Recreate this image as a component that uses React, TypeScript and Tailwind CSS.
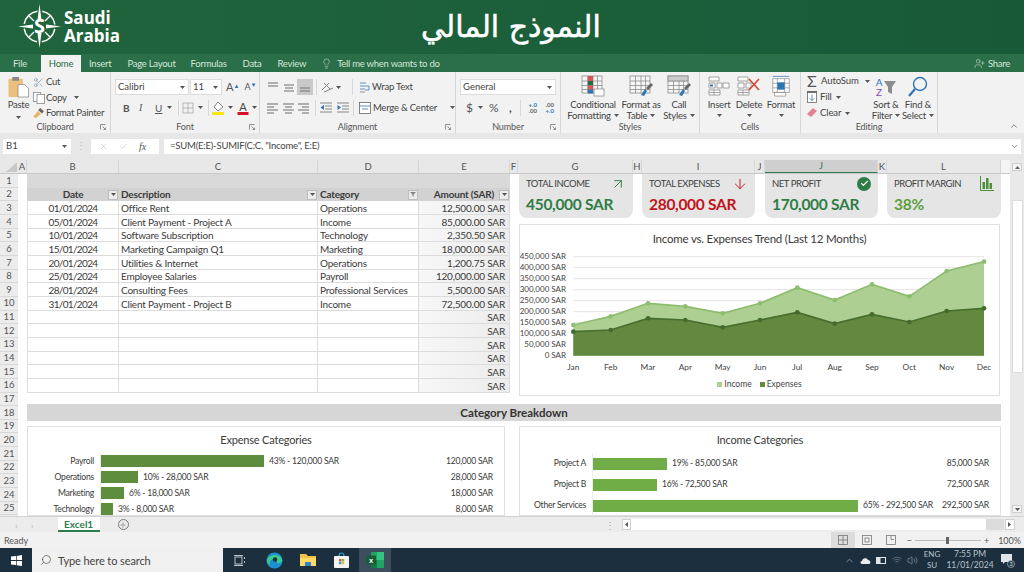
import React from "react";
import { Lightbulb, UserPlus, Scissors, ArrowUpRight, ArrowDown, Check, Search, Plus, X, ChevronUp, ChevronDown, Wifi, Volume2 } from "lucide-react";

const Caret = ({ className = "" }: { className?: string }) => (
  <svg width="5" height="3" viewBox="0 0 5 3" className={`shrink-0 ${className}`}><polygon points="0,0 5,0 2.5,3" fill="#555" /></svg>
);

const Launcher = () => (
  <svg width="6" height="6" viewBox="0 0 6 6" className="absolute right-[4px] bottom-[3px]" fill="none" stroke="#777" strokeWidth="0.8"><path d="M0.5 5.5V0.5H5.5M2.5 2.5L5.5 5.5M5.5 3.5V5.5H3.5" /></svg>
);

const Lines = ({ ys, xs }: { ys: number[]; xs: [number, number][] }) => (
  <svg width="12" height="12" viewBox="0 0 12 12" stroke="#7a7a7a" strokeWidth="1.1">
    {ys.map((y, i) => <line key={i} x1={xs[i][0]} x2={xs[i][1]} y1={y} y2={y} />)}
  </svg>
);

const Group = ({ w, label, launcher, children }: { w: string; label: string; launcher?: boolean; children: React.ReactNode }) => (
  <div className={`${w} relative flex h-full shrink-0 flex-col border-r border-[#d6d6d6]`}>
    <div className="min-h-0 flex-1">{children}</div>
    <div className="flex h-[13px] items-center justify-center text-[9px] leading-none tracking-[-0.1px] text-[#555]">{label}</div>
    {launcher && <Launcher />}
  </div>
);

const Big = ({ w, icon, l1, l2, caret }: { w: string; icon: React.ReactNode; l1: string; l2?: string; caret?: boolean }) => (
  <div className={`${w} flex shrink-0 flex-col items-center text-[9.5px] leading-[11px] tracking-[-0.2px] text-[#444]`}>
    <div className="flex h-[22px] items-center justify-center">{icon}</div>
    <div className="mt-[2px] whitespace-nowrap">{l1}</div>
    <div className="flex h-[11px] items-center gap-[3px] whitespace-nowrap">{l2}{caret && <Caret />}</div>
  </div>
);

const Sep = ({ className = "" }: { className?: string }) => <div className={`h-[16px] w-px shrink-0 bg-[#d8d8d8] ${className}`} />;

const Logo = () => (
  <svg width="44" height="46" viewBox="0 0 44 46" className="shrink-0">
    <circle cx="21.5" cy="22.5" r="15.5" fill="none" stroke="#fff" strokeWidth="1.5" strokeDasharray="19.3 5" strokeDashoffset="-2.5" />
    <polygon points="21.5,0 23.5,16 19.5,16" fill="#fff" />
    <polygon points="21.5,44 23.5,29 19.5,29" fill="#fff" />
    <polygon points="0,22.5 15,20.5 15,24.5" fill="#fff" />
    <polygon points="43,22.5 28,20.5 28,24.5" fill="#fff" />
    <g stroke="#fff" strokeWidth="1.2">
      <line x1="11" y1="12" x2="16" y2="17" /><line x1="32" y1="12" x2="27" y2="17" />
      <line x1="11" y1="33" x2="16" y2="28" /><line x1="32" y1="33" x2="27" y2="28" />
    </g>
    <text x="21.5" y="29" textAnchor="middle" fontSize="20" fontWeight="700" fill="#fff" fontFamily="Open Sans, sans-serif">S</text>
  </svg>
);

const TitleBar = () => (
  <div className="flex h-[54px] items-center bg-gradient-to-r from-[#20643d] to-[#185a38]">
    <div className="flex w-[421px] shrink-0 items-center pl-[18px]">
      <Logo />
      <div className="ml-[2px] text-[17px] font-bold leading-[18.5px] text-white [font-family:'Open_Sans',sans-serif]">Saudi<br />Arabia</div>
    </div>
    <div dir="rtl" className="text-[30px] leading-none text-white [-webkit-text-stroke:0.5px_white] [font-family:'DejaVu_Sans',sans-serif]">النموذج المالي</div>
  </div>
);

const tabs: [string, string][] = [["Insert", "ml-[8px]"], ["Page Layout", "ml-[16px]"], ["Formulas", "ml-[15px]"], ["Data", "ml-[16px]"], ["Review", "ml-[16px]"]];

const TabBar = () => (
  <div className="flex h-[18px] items-end bg-[#2b6f48] text-[9.5px] leading-none tracking-[-0.25px] text-[#d5e6da]">
    <div className="flex h-[17px] w-[41px] items-center pl-[13px]">File</div>
    <div className="flex h-[17px] w-[40px] items-center justify-center bg-[#f2f2f2] text-[#2b6f48]">Home</div>
    {tabs.map(([t, c]) => <div key={t} className={`flex h-[17px] items-center whitespace-nowrap ${c}`}>{t}</div>)}
    <div className="ml-[15px] flex h-[17px] items-center gap-[5px] whitespace-nowrap">
      <Lightbulb size={11} strokeWidth={1.2} />Tell me when wamts to do
    </div>
    <div className="ml-auto flex h-[17px] items-center gap-[3px] pr-[14px]"><UserPlus size={11} strokeWidth={1.2} />Share</div>
  </div>
);

const PasteIcon = () => (
  <svg width="23" height="22" viewBox="0 0 23 23">
    <rect x="1" y="3" width="15" height="19" rx="1" fill="#ecc07c" />
    <rect x="5" y="1" width="7" height="4" fill="#8a8a8a" />
    <path d="M11 9h7l4 4v9H11z" fill="#fff" stroke="#888" strokeWidth="0.8" />
  </svg>
);
const CopyIcon = () => (
  <svg width="12" height="12" viewBox="0 0 12 12" fill="#fff" stroke="#888" strokeWidth="0.8"><rect x="0.5" y="0.5" width="7" height="9" /><rect x="4" y="2.5" width="7.5" height="9" /></svg>
);
const PainterIcon = () => (
  <svg width="12" height="10" viewBox="0 0 12 10"><path d="M0 9L5 3L8 6L3 10z" fill="#e8b567" /><rect x="6" y="1" width="5" height="3" transform="rotate(40 8 2)" fill="#666" /></svg>
);

const Clipboard = () => (
  <Group w="w-[111px]" label="Clipboard" launcher>
    <div className="flex pt-[4px] text-[9.5px] leading-none tracking-[-0.25px] text-[#444]">
      <div className="ml-[6px] flex w-[25px] flex-col items-center">
        <PasteIcon />
        <div className="mt-[2px]">Paste</div>
        <Caret className="mt-[6px]" />
      </div>
      <div className="ml-[2px] flex flex-col gap-[3.5px] whitespace-nowrap">
        <div className="flex h-[12px] items-center gap-[2px]"><Scissors size={11} strokeWidth={1.1} color="#5a7fa5" />Cut</div>
        <div className="flex h-[12px] items-center gap-[1px]"><CopyIcon />Copy<Caret className="ml-[6px]" /></div>
        <div className="flex h-[12px] items-center gap-[1px]"><PainterIcon />Format Painter</div>
      </div>
    </div>
  </Group>
);

const Box = ({ w, text, className = "" }: { w: string; text: string; className?: string }) => (
  <div className={`${w} flex h-[16px] shrink-0 items-center justify-between border border-[#dcdcdc] bg-white pl-[2px] pr-[3px] text-[9.5px] text-[#444] ${className}`}>{text}<Caret /></div>
);

const Font = () => (
  <Group w="w-[149px]" label="Font" launcher>
    <div className="flex h-[23px] items-end pl-[4px]">
      <Box w="w-[74px]" text="Calibri" />
      <Box w="w-[32px]" text="11" className="ml-px" />
      <span className="ml-[4px] text-[11px] leading-[16px] text-[#555]">A<sup className="text-[6px] text-[#2e75b6]">▲</sup></span>
      <span className="ml-[5px] text-[9px] leading-[16px] text-[#555]">A<sup className="text-[6px] text-[#2e75b6]">▼</sup></span>
    </div>
    <div className="mt-[5px] flex h-[15px] items-center pl-[12px] text-[10px] leading-none text-[#555]">
      <span className="w-[16px] font-bold">B</span>
      <span className="w-[16px] italic [font-family:'Liberation_Serif',serif]">I</span>
      <span className="w-[12px] underline">U</span>
      <Caret />
      <Sep className="ml-[6px]" />
      <svg width="12" height="12" viewBox="0 0 12 12" fill="none" stroke="#aaa" strokeWidth="0.8" className="ml-[3px]"><rect x="1" y="1" width="10" height="10" /><path d="M6 1v10M1 6h10" /></svg>
      <Caret className="ml-[4px]" />
      <Sep className="ml-[5px]" />
      <svg width="13" height="14" viewBox="0 0 13 14" className="ml-[3px]"><path d="M6 1L11 6L6 10L2 6z" fill="#fff" stroke="#666" strokeWidth="0.8" /><rect x="0" y="11" width="12" height="3" fill="#f5e614" /></svg>
      <Caret className="ml-[3px]" />
      <svg width="12" height="14" viewBox="0 0 12 14" className="ml-[4px]"><text x="6" y="9.5" textAnchor="middle" fontSize="11" fill="#444" fontFamily="Lato, sans-serif">A</text><rect x="0.5" y="11" width="11" height="3" fill="#d8112a" /></svg>
      <Caret className="ml-[3px]" />
    </div>
  </Group>
);

const IndentIcon = ({ flip }: { flip?: boolean }) => (
  <svg width="12" height="11" viewBox="0 0 12 11" stroke="#7a7a7a" strokeWidth="0.9">
    <path d="M0 1h12M5 4h7M5 7h7M0 10h12" />
    <polygon points={flip ? "4,5.5 0.5,3 0.5,8" : "0.5,5.5 4,3 4,8"} fill="#2e75b6" stroke="none" />
  </svg>
);

const Alignment = () => (
  <Group w="w-[196px]" label="Alignment" launcher>
    <div className="flex h-[23px] items-end pl-[7px]">
      <div className="flex h-[16px] w-[16px] items-center"><Lines ys={[2, 5]} xs={[[1, 11], [1, 11]]} /></div>
      <div className="flex h-[16px] w-[14px] items-center"><Lines ys={[4, 7, 10]} xs={[[1, 11], [2, 10], [1, 11]]} /></div>
      <div className="flex h-[16px] w-[16px] items-center justify-center bg-[#c9c9c9]"><Lines ys={[7, 10]} xs={[[1, 11], [1, 11]]} /></div>
      <Sep className="ml-[3px]" />
      <svg width="13" height="12" viewBox="0 0 13 12" className="ml-[4px] mb-[2px]" fill="none" stroke="#777" strokeWidth="0.9"><path d="M1 9L8 2M3 2L9 8M3 11L12 7" /></svg>
      <Caret className="mb-[6px] ml-[2px]" />
      <Sep className="ml-[11px]" />
      <div className="ml-[6px] flex h-[16px] items-center gap-[2px] whitespace-nowrap text-[9.5px] leading-none tracking-[-0.2px] text-[#444]">
        <svg width="11" height="12" viewBox="0 0 11 12" fill="none" stroke="#888" strokeWidth="0.9"><path d="M1 2h6M1 5h9M1 8h5M10 5v4H6" stroke="#4a86c0" /><path d="M1 11h5" /></svg>
        Wrap Text
      </div>
    </div>
    <div className="mt-[5px] flex h-[15px] items-center pl-[7px]">
      <div className="w-[16px]"><Lines ys={[2, 5, 8, 11]} xs={[[0, 11], [0, 7], [0, 11], [0, 7]]} /></div>
      <div className="w-[16px]"><Lines ys={[2, 5, 8, 11]} xs={[[0, 11], [2, 9], [0, 11], [2, 9]]} /></div>
      <div className="w-[14px]"><Lines ys={[2, 5, 8, 11]} xs={[[0, 11], [4, 11], [0, 11], [4, 11]]} /></div>
      <Sep className="ml-[3px]" />
      <div className="ml-[4px]"><IndentIcon /></div>
      <div className="ml-[5px]"><IndentIcon flip /></div>
      <Sep className="ml-[4px]" />
      <div className="ml-[5px] flex h-[16px] items-center gap-[2px] whitespace-nowrap text-[9.5px] leading-none tracking-[-0.2px] text-[#444]">
        <svg width="12" height="12" viewBox="0 0 12 12" fill="#fff" stroke="#666" strokeWidth="0.8"><rect x="0.5" y="0.5" width="11" height="11" /><path d="M0.5 4h11M3 7h6" stroke="#2e75b6" /></svg>
        Merge &amp; Center
        <Caret className="ml-[11px]" />
      </div>
    </div>
  </Group>
);

const NumIcon = ({ a, b, up }: { a: string; b: string; up: boolean }) => (
  <div className="relative flex h-[12px] w-[11px] flex-col items-end text-[6px] font-bold leading-[6px] text-[#666]">
    <span className={up ? "text-[#2e75b6]" : ""}>{a}</span><span className={up ? "" : "text-[#2e75b6]"}>{b}</span>
  </div>
);

const NumberGroup = () => (
  <Group w="w-[105px]" label="Number" launcher>
    <div className="flex h-[23px] items-end pl-[4px]"><Box w="w-[96px]" text="General" /></div>
    <div className="mt-[5px] flex h-[15px] items-center pl-[10px] text-[12px] leading-none text-[#555]">
      <span className="w-[9px]">$</span>
      <Caret className="ml-[3px]" />
      <span className="ml-[6px] w-[17px]">%</span>
      <span className="ml-[3px] w-[9px] font-bold">,</span>
      <Sep className="ml-[2px]" />
      <div className="ml-[5px]"><NumIcon a="+.0" b=".00" up /></div>
      <div className="ml-[6px]"><NumIcon a=".00" b="+.0" up={false} /></div>
    </div>
  </Group>
);

const TableGrid = ({ children }: { children?: React.ReactNode }) => (
  <svg width="24" height="22" viewBox="0 0 24 22" fill="#f6f6f6" stroke="#8d8d8d" strokeWidth="0.8">
    <rect x="1" y="1" width="20" height="17" />
    <path d="M1 6h20M1 10.5h20M1 14.5h20M6.5 1v17M12 1v17M16.5 1v17" fill="none" />
    {children}
  </svg>
);
const Brush = () => <g stroke="none"><path d="M12 20L16 14L18 16L15 21z" fill="#2e75b6" /><path d="M17 13L22 8L24 10L19 15z" fill="#666" /></g>;

const Styles = () => (
  <Group w="w-[139px]" label="Styles" launcher={false}>
    <div className="flex pt-[3px]">
      <Big w="w-[54px] ml-[5px]" l1="Conditional" l2="Formatting" caret icon={
        <TableGrid>
          <rect x="7" y="1" width="5" height="5" fill="#d9534f" stroke="none" />
          <rect x="7" y="6" width="5" height="4.5" fill="#1d6f42" stroke="none" />
          <rect x="7" y="10.5" width="5" height="4" fill="#d9534f" stroke="none" />
          <rect x="7" y="14.5" width="5" height="4" fill="#2e75b6" stroke="none" />
          <rect x="13" y="14" width="10" height="7" fill="#fff" />
        </TableGrid>} />
      <Big w="w-[42px]" l1="Format as" l2="Table" caret icon={<TableGrid><Brush /></TableGrid>} />
      <Big w="w-[34px]" l1="Call" l2="Styles" caret icon={<TableGrid><rect x="1" y="1" width="20" height="5" fill="#ccc" /><Brush /></TableGrid>} />
    </div>
  </Group>
);

const Cells = () => (
  <Group w="w-[101px]" label="Cells">
    <div className="flex pt-[3px] pl-[4px]">
      <Big w="w-[30px]" l1="Insert" caret icon={
        <svg width="22" height="20" viewBox="0 0 22 20" fill="#fff" stroke="#8d8d8d" strokeWidth="0.8"><path d="M1 1h10v4H1zM1 7h6v5H1zM9 7h5v5H9zM15 7h6v5h-6zM1 14h11v5H1zM6 14v5M1 16.5h11" /><rect x="2" y="8.5" width="3" height="2" fill="#2e75b6" stroke="none" /></svg>} />
      <Big w="w-[30px]" l1="Delete" caret icon={
        <svg width="24" height="20" viewBox="0 0 24 20" fill="#fff" stroke="#8d8d8d" strokeWidth="0.8"><path d="M1 1h10v4H1zM1 7h6v5H1zM9 7h5v5H9zM1 14h11v5H1zM6 14v5M1 16.5h11" /><path d="M12 3L22 14M22 3L12 14" stroke="#d9442f" strokeWidth="1.6" fill="none" /></svg>} />
      <Big w="w-[34px]" l1="Format" caret icon={
        <svg width="20" height="22" viewBox="0 0 20 24" fill="#fff" stroke="#8d8d8d" strokeWidth="0.8"><path d="M1 4h18v15H1zM1 9h18M1 14h18M6 4v15M14 4v15M3 23h12v-4H3z" /><rect x="6" y="8" width="8" height="8" fill="#2e75b6" stroke="none" /><path d="M1 1.5h18" stroke="#2e75b6" /></svg>} />
    </div>
  </Group>
);

const Editing = () => (
  <Group w="w-[137px]" label="Editing">
    <div className="flex pt-[3px] pl-[6px]">
      <div className="flex w-[66px] shrink-0 flex-col gap-[4px] whitespace-nowrap text-[9.5px] leading-none tracking-[-0.1px] text-[#444]">
        <div className="flex h-[12px] items-center gap-[3px]"><span className="w-[11px] text-[16px] text-[#555]">Σ</span>AutoSum<Caret className="ml-[3px]" /></div>
        <div className="flex h-[12px] items-center gap-[3px]">
          <svg width="10" height="12" viewBox="0 0 10 12" fill="#fff" stroke="#666" strokeWidth="0.8"><rect x="0.5" y="1" width="9" height="10.5" /><path d="M0 1h10" strokeWidth="1.8" /><path d="M5 3.5v6M3 7.5l2 2 2-2" stroke="#2e75b6" fill="none" /></svg>
          Fill<Caret className="ml-[1px]" />
        </div>
        <div className="flex h-[12px] items-center gap-[3px]">
          <svg width="10" height="10" viewBox="0 0 10 10"><path d="M0 6L6 0L10 3L4 9z" fill="#e87d96" /></svg>
          Clear<Caret className="ml-[1px]" />
        </div>
      </div>
      <Big w="w-[26px]" l1="Sort &" l2="Filter" caret icon={
        <svg width="22" height="21" viewBox="0 0 22 21"><text x="4" y="9.5" textAnchor="middle" fontSize="10" fill="#2e75b6" fontFamily="Lato, sans-serif">A</text><text x="4" y="20" textAnchor="middle" fontSize="10" fill="#8c4ca5" fontFamily="Lato, sans-serif">Z</text><path d="M9 5h12l-4 6v7l-4-2v-5z" fill="#8d8d8d" /></svg>} />
      <Big w="w-[38px]" l1="Find &" l2="Select" caret icon={
        <svg width="20" height="21" viewBox="0 0 20 21" fill="none" stroke="#2e75b6" strokeWidth="1.4"><circle cx="12" cy="8" r="6.5" /><path d="M7 13L1 20" strokeWidth="2.2" /></svg>} />
    </div>
  </Group>
);

const Ribbon = () => (
  <div className="relative flex h-[61px] bg-[#f2f2f2]">
    <Clipboard /><Font /><Alignment /><NumberGroup /><Styles /><Cells /><Editing />
    <ChevronUp size={10} color="#666" className="absolute bottom-[2px] right-[5px]" />
  </div>
);

const FormulaBar = () => (
  <div className="flex h-[27px] items-start bg-[#e7e7e7] pl-[3px] pr-[3px] pt-[6px] text-[9.5px] text-[#444]">
    <div className="flex h-[15px] w-[68px] items-center justify-between bg-white pl-[3px] pr-[4px]">B1<Caret /></div>
    <div className="flex h-[15px] w-[20px] items-center justify-center text-[#bbb]">⋮</div>
    <div className="flex h-[15px] w-[68px] items-center gap-[11px] bg-white pl-[8px] text-[#aaa]">
      <X size={9} strokeWidth={1.2} /><Check size={9} strokeWidth={1.2} />
      <span className="text-[10px] italic text-[#555] [font-family:'Liberation_Serif',serif]">fx</span>
    </div>
    <div className="ml-[5px] flex h-[15px] flex-1 items-center justify-between bg-white pl-[6px] pr-[2px] text-[9.5px] tracking-[-0.2px]">
      =SUM(E:E)-SUMIF(C:C, "Income", E:E)
      <ChevronDown size={9} color="#777" />
    </div>
  </div>
);

const cols: [string, string, boolean?][] = [
  ["A", "w-[9px]"], ["B", "w-[92px]"], ["C", "w-[199px]"], ["D", "w-[101px]"], ["E", "w-[91px]"], ["F", "w-[8px]"],
  ["G", "w-[115px]"], ["H", "w-[9px]"], ["I", "w-[113px]"], ["J", "w-[10px]"], ["J", "w-[113px]", true], ["K", "w-[9px]"], ["L", "w-[114px]"],
];

const ColHeaders = () => (
  <div className="flex h-[14px] shrink-0 border-b border-[#c8c8c8] bg-[#f4f4f4] text-[9.5px] leading-none text-[#555]">
    <div className="flex h-full w-[18px] items-end justify-end bg-[#e8e8e8] pb-[1px] pr-px">
      <svg width="11" height="10" viewBox="0 0 11 10"><polygon points="11,0 11,10 0,10" fill="#c8c8c8" /></svg>
    </div>
    {cols.map(([c, w, active], i) => (
      <div key={i} className={`${w} flex h-full items-center justify-center border-r border-[#d6d6d6] ${active ? "border-b border-b-[#2f7d4f] bg-[#cfcfcf] text-[#2f7d4f]" : "bg-[#e8e8e8]"}`}>{c}</div>
    ))}
  </div>
);

const RowHeaders = () => (
  <div className="flex w-[18px] shrink-0 flex-col bg-[#ececec] text-[9.5px] leading-none text-[#555]">
    {Array.from({ length: 25 }, (_, i) => (
      <div key={i} className="flex h-[13.67px] shrink-0 items-center justify-center border-b border-[#d8d8d8]">{i + 1}</div>
    ))}
  </div>
);

const data = [
  ["01/01/2024", "Office Rent", "Operations", "12,500.00 SAR"],
  ["05/01/2024", "Client Payment - Project A", "Income", "85,000.00 SAR"],
  ["10/01/2024", "Software Subscription", "Technology", "2,350.50 SAR"],
  ["15/01/2024", "Marketing Campaign Q1", "Marketing", "18,000.00 SAR"],
  ["20/01/2024", "Utilities & Internet", "Operations", "1,200.75 SAR"],
  ["25/01/2024", "Employee Salaries", "Payroll", "120,000.00 SAR"],
  ["28/01/2024", "Consulting Fees", "Professional Services", "5,500.00 SAR"],
  ["31/01/2024", "Client Payment - Project B", "Income", "72,500.00 SAR"],
  ["", "", "", "SAR"], ["", "", "", "SAR"], ["", "", "", "SAR"], ["", "", "", "SAR"], ["", "", "", "SAR"], ["", "", "", "SAR"],
];

const FilterBtn = ({ funnel }: { funnel?: boolean }) => (
  <span className="absolute right-[1px] top-[2px] flex h-[10px] w-[10px] items-center justify-center border border-[#bdbdbd] bg-[#ececec]">
    {funnel ? <svg width="6" height="5" viewBox="0 0 6 5"><path d="M0 0h6L3.6 2.5V5L2.4 4V2.5z" fill="#888" /></svg> : <Caret />}
  </span>
);

const Table = () => (
  <div className="w-[483px] shrink-0 text-[10px] leading-none tracking-[-0.2px] text-[#3a3a3a]">
    <div className="h-[13.67px] bg-[#d9d9d9]" />
    <div className="grid h-[13.67px] grid-cols-[92px_199px_101px_91px] bg-[#d2d2d2] font-bold">
      <div className="relative flex items-center justify-center">Date<FilterBtn /></div>
      <div className="relative flex items-center pl-[2px]">Description<FilterBtn /></div>
      <div className="relative flex items-center pl-[2px]">Category<FilterBtn funnel /></div>
      <div className="relative flex items-center justify-end pr-[16px]">Amount (SAR)<FilterBtn /></div>
    </div>
    {data.map((r, i) => (
      <div key={i} className="grid h-[13.67px] grid-cols-[92px_199px_101px_91px] border-b border-[#dcdcdc]">
        <div className="flex items-center justify-center border-l border-r border-[#dcdcdc] pt-px tracking-[-0.65px]">{r[0]}</div>
        <div className="flex items-center border-r border-[#dcdcdc] pl-[2px] pt-px">{r[1]}</div>
        <div className="flex items-center whitespace-nowrap border-r border-[#dcdcdc] pl-[2px] pt-px">{r[2]}</div>
        <div className="flex items-center justify-end border-r border-[#dcdcdc] bg-gradient-to-r from-[#f7f7f7] to-[#ececec] pr-[4px] pt-px">{r[3]}</div>
      </div>
    ))}
  </div>
);

const Kpi = ({ w, label, value, color, icon }: { w: string; label: string; value: string; color: string; icon: React.ReactNode }) => (
  <div className={`${w} h-[44px] shrink-0 rounded-b-[8px] bg-[#e5e5e5] pl-[7px] pr-[7px]`}>
    <div className="flex h-[19px] items-center justify-between whitespace-nowrap text-[9.5px] leading-none tracking-[-0.45px] text-[#3f3f3f]">{label}{icon}</div>
    <div className={`whitespace-nowrap text-[15.5px] font-bold leading-[22px] tracking-[-0.3px] ${color}`}>{value}</div>
  </div>
);

const income = [[190, 510], [302, 484], [414, 445], [526, 454], [638, 475], [750, 445], [862, 398], [974, 435], [1086, 388], [1198, 424], [1310, 348], [1422, 320]];
const expense = [[190, 530], [302, 525], [414, 490], [526, 495], [638, 517], [750, 495], [862, 472], [974, 506], [1086, 478], [1198, 501], [1310, 468], [1422, 460]];
const months = ["Jan", "Feb", "Mar", "Apr", "May", "Jun", "Jul", "Aug", "Sep", "Oct", "Nov", "Dec"];
const yLabels = ["450,000", "400,000", "350,000", "300,000", "250,000", "200,000", "150,000", "100,000", "50,000", "0"];
const pts = (a: number[][]) => a.map((p) => p.join(",")).join(" ");

const TrendChart = () => (
  <div className="mt-[6px] flex h-[172px] w-[481px] flex-col border border-[#e0e0e0] bg-white">
    <div className="flex h-[25px] shrink-0 items-center justify-center pt-[2px] text-[11.5px] leading-none tracking-[-0.2px] text-[#3a3a3a]">Income vs. Expenses Trend (Last 12 Months)</div>
    <svg viewBox="30 285 1437 384" className="h-[128px] w-full shrink-0">
      {yLabels.map((l, i) => {
        const y = 305 + i * 33;
        return (
          <g key={i}>
            {i < 9 && <line x1="190" x2="1422" y1={y} y2={y} stroke="#e6e2e8" strokeWidth="3" />}
            <text x="168" y={y + 8} textAnchor="end" fontSize="24" fill="#444" fontFamily="Lato, sans-serif">{l} SAR</text>
          </g>
        );
      })}
      <polygon points={`190,602 ${pts(income)} 1422,602`} fill="#aecf92" />
      <polyline points={pts(income)} fill="none" stroke="#8dbd6f" strokeWidth="5" />
      {income.map(([x, y], i) => <circle key={i} cx={x} cy={y} r="7" fill="#8dbd6f" />)}
      <polygon points={`190,602 ${pts(expense)} 1422,602`} fill="#62893f" />
      <polyline points={pts(expense)} fill="none" stroke="#466f2e" strokeWidth="5" />
      {expense.map(([x, y], i) => <circle key={i} cx={x} cy={y} r="7" fill="#426b2c" />)}
      {months.map((m, i) => <text key={m} x={190 + i * 112} y="644" textAnchor="middle" fontSize="25" fill="#444" fontFamily="Lato, sans-serif">{m}</text>)}
    </svg>
    <div className="flex h-[12px] items-center justify-center gap-[8px] text-[8.5px] leading-none text-[#444]">
      <span className="flex items-center gap-[2px]"><span className="h-[5px] w-[5px] bg-[#aecf92]" />Income</span>
      <span className="flex items-center gap-[2px]"><span className="h-[5px] w-[5px] bg-[#62893f]" />Expenses</span>
    </div>
  </div>
);

const Dashboard = () => (
  <div className="w-[482px] shrink-0">
    <div className="flex">
      <Kpi w="w-[114px]" label="TOTAL INCOME" value="450,000 SAR" color="text-[#2f7d46]" icon={<ArrowUpRight size={16} strokeWidth={1.4} color="#2f7d46" />} />
      <Kpi w="w-[113px] ml-[9px]" label="TOTAL EXPENSES" value="280,000 SAR" color="text-[#c0141c]" icon={<ArrowDown size={16} strokeWidth={1.4} color="#c0141c" />} />
      <Kpi w="w-[113px] ml-[10px]" label="NET PROFIT" value="170,000 SAR" color="text-[#2f7d46]" icon={
        <span className="flex h-[14px] w-[14px] items-center justify-center rounded-full bg-[#2f7d46]"><Check size={9} strokeWidth={3} color="#fff" /></span>} />
      <Kpi w="w-[114px] ml-[9px]" label="PROFIT MARGIN" value="38%" color="text-[#5e9e3e]" icon={
        <svg width="14" height="15" viewBox="0 0 14 15" fill="#4f8f3a"><path d="M0.5 0v14.5H14" fill="none" stroke="#4f8f3a" /><rect x="2.5" y="6" width="2.5" height="7" /><rect x="6" y="2" width="2.5" height="11" /><rect x="9.5" y="7" width="2.5" height="6" /></svg>} />
    </div>
    <TrendChart />
  </div>
);

const HBarRow = ({ label, bar, text, value, color, h }: { label: string; bar: string; text: string; value: string; color: string; h: string }) => (
  <div className={`flex ${h} items-center whitespace-nowrap text-[8.6px] leading-none tracking-[-0.25px] text-[#3a3a3a]`}>
    <div className="w-[66px] shrink-0 text-right">{label}</div>
    <div className="ml-[6px] flex h-full flex-1 items-center border-l border-[#ececec]">
      <div className={`${bar} h-[12px] shrink-0 ${color}`} />
      <div className="ml-[5px]">{text}</div>
      <div className="ml-auto pr-[11px]">{value}</div>
    </div>
  </div>
);

const Breakdown = () => (
  <>
    <div className="mt-[8px] flex h-[17px] shrink-0 items-center justify-center bg-[#d6d6d6] text-[11.5px] font-bold leading-none text-[#333]">Category Breakdown</div>
    <div className="mt-[5px] flex min-h-0 flex-1 overflow-hidden">
      <div className="w-[478px] shrink-0 border border-[#e0e0e0] bg-white">
        <div className="flex h-[25px] items-center justify-center text-[11px] leading-none tracking-[-0.2px] text-[#3a3a3a]">Expense Categories</div>
        <div className="mt-[1px]">
          <HBarRow h="h-[16px]" label="Payroll" bar="w-[163px]" text="43% - 120,000 SAR" value="120,000 SAR" color="bg-[#5f8d3e]" />
          <HBarRow h="h-[16px]" label="Operations" bar="w-[37px]" text="10% - 28,000 SAR" value="28,000 SAR" color="bg-[#5f8d3e]" />
          <HBarRow h="h-[16px]" label="Marketing" bar="w-[23px]" text="6% - 18,000 SAR" value="18,000 SAR" color="bg-[#5f8d3e]" />
          <HBarRow h="h-[16px]" label="Technology" bar="w-[12px]" text="3% - 8,000 SAR" value="8,000 SAR" color="bg-[#5f8d3e]" />
        </div>
      </div>
      <div className="ml-[14px] w-[482px] shrink-0 border border-[#e0e0e0] bg-white">
        <div className="flex h-[25px] items-center justify-center text-[11px] leading-none tracking-[-0.2px] text-[#3a3a3a]">Income Categories</div>
        <div className="mt-[1px]">
          <HBarRow h="h-[21px]" label="Project A" bar="w-[74px]" text="19% - 85,000 SAR" value="85,000 SAR" color="bg-[#70ad47]" />
          <HBarRow h="h-[21px]" label="Project B" bar="w-[64px]" text="16% - 72,500 SAR" value="72,500 SAR" color="bg-[#70ad47]" />
          <HBarRow h="h-[21px]" label="Other Services" bar="w-[265px]" text="65% - 292,500 SAR" value="292,500 SAR" color="bg-[#70ad47]" />
        </div>
      </div>
    </div>
  </>
);

const VScroll = () => (
  <div className="flex w-[14px] shrink-0 flex-col items-center bg-[#e9e9e9] py-[3px]">
    <div className="flex h-[8px] w-[10px] items-center justify-center border border-[#cfcfcf] bg-[#f4f4f4]"><svg width="5" height="3" viewBox="0 0 5 3"><polygon points="0,3 5,3 2.5,0" fill="#666" /></svg></div>
    <div className="mt-[29px] h-[173px] w-[11px] border border-[#dcdcdc] bg-white" />
    <div className="mt-auto flex h-[8px] w-[10px] items-center justify-center border border-[#cfcfcf] bg-[#f4f4f4]"><Caret /></div>
  </div>
);

const SheetBar = () => (
  <div className="flex h-[16px] items-center border-t border-[#d2d2d2] bg-[#ececec] text-[10px] leading-none">
    <span className="ml-[15px] text-[#bbb]">‹</span>
    <span className="ml-[13px] text-[#bbb]">›</span>
    <div className="ml-[24px] flex h-[15px] w-[42px] items-center justify-center border-b-2 border-[#2f7d4f] bg-white font-bold text-[#2f7d4f]">Excel1</div>
    <div className="ml-[18px] flex h-[11px] w-[11px] items-center justify-center rounded-full border border-[#777]"><Plus size={8} color="#666" strokeWidth={1.5} /></div>
    <span className="ml-[476px] text-[#aaa]">⋮</span>
    <div className="ml-[7px] flex h-[11px] w-[9px] items-center justify-center border border-[#d0d0d0] bg-white"><svg width="3" height="5" viewBox="0 0 3 5"><polygon points="3,0 3,5 0,2.5" fill="#555" /></svg></div>
    <div className="h-[11px] w-[355px] bg-white" />
    <div className="h-[11px] w-[18px] bg-[#dcdcdc]" />
    <div className="ml-[1px] flex h-[11px] w-[10px] items-center justify-center border border-[#d0d0d0] bg-white"><svg width="3" height="5" viewBox="0 0 3 5"><polygon points="0,0 0,5 3,2.5" fill="#555" /></svg></div>
  </div>
);

const StatusBar = () => (
  <div className="flex h-[16px] items-center bg-[#f1f1f1] pl-[4px] pr-[3px] text-[9px] leading-none text-[#555]">
    Ready
    <div className="ml-auto flex h-full w-[24px] items-center justify-center bg-[#dcdcdc]">
      <svg width="10" height="10" viewBox="0 0 10 10" fill="none" stroke="#777" strokeWidth="0.8"><rect x="0.5" y="0.5" width="9" height="9" /><path d="M5 0.5v9M0.5 5h9" /></svg>
    </div>
    <svg width="10" height="10" viewBox="0 0 10 10" fill="none" stroke="#777" strokeWidth="0.8" className="ml-[7px]"><rect x="0.5" y="0.5" width="9" height="9" /><rect x="3" y="3" width="4" height="4" /></svg>
    <svg width="10" height="10" viewBox="0 0 10 10" fill="none" stroke="#777" strokeWidth="0.8" className="ml-[14px]"><rect x="0.5" y="0.5" width="9" height="9" /><path d="M5 0.5v4h3" /></svg>
    <span className="ml-[11px]">−</span>
    <div className="relative ml-[3px] h-px w-[66px] bg-[#bbb]">
      <div className="absolute left-[31px] top-[-3px] h-[7px] w-[3px] bg-[#666]" />
    </div>
    <span className="ml-[3px]">+</span>
    <span className="ml-[9px]">100%</span>
  </div>
);

const Taskbar = () => (
  <div className="flex h-[24px] items-center bg-[#1b2f3f]">
    <div className="flex h-full w-[32px] items-center justify-center">
      <svg width="11" height="11" viewBox="0 0 11 11" fill="#fff"><path d="M0 1.5L5 1v4H0zM5.7 1L11 0v5H5.7zM0 6h5v4l-5-.6zM5.7 6H11v5l-5.3-.8z" /></svg>
    </div>
    <div className="flex h-full w-[191px] items-center gap-[6px] bg-[#f0f0f0] pl-[8px] text-[11px] leading-none tracking-[-0.1px] text-[#444]">
      <Search size={12} strokeWidth={1.3} className="-scale-x-100" />Type here to search
    </div>
    <svg width="11" height="11" viewBox="0 0 11 11" fill="none" stroke="#b8c2c9" strokeWidth="1" className="ml-[11px]"><rect x="1" y="2" width="7" height="7" /><path d="M0 0.5h9M0 10.5h9M10.5 2v2M10.5 6v2" /></svg>
    <svg width="17" height="17" viewBox="0 0 17 17" className="ml-[21px]">
      <circle cx="8.5" cy="8.5" r="8" fill="#1b8fd0" />
      <path d="M1 8C3 2 13 1 16 7c1 3-2 5-5 4 1-3-1-5-4-4-3 1-4 3-3 6-2-1-3-3-3-5z" fill="#3ccb8d" />
      <circle cx="9" cy="7.5" r="2.2" fill="#1b2f3f" />
    </svg>
    <svg width="16" height="14" viewBox="0 0 16 14" className="ml-[17px]"><path d="M0 1h6l2 2h8v10H0z" fill="#f0c04a" /><rect x="0" y="5" width="16" height="8" fill="#ffd966" /><rect x="5" y="9" width="6" height="4" fill="#2e86c9" /></svg>
    <svg width="15" height="16" viewBox="0 0 15 16" className="ml-[18px]"><path d="M5 4C5 0 10 0 10 4" fill="none" stroke="#2e9fd8" strokeWidth="1.2" /><rect x="0" y="4" width="15" height="12" rx="1" fill="#f4f4f4" /><rect x="5" y="7" width="2.4" height="2.4" fill="#e9492d" /><rect x="7.8" y="7" width="2.4" height="2.4" fill="#7cbb3a" /><rect x="5" y="9.8" width="2.4" height="2.4" fill="#2e9fd8" /><rect x="7.8" y="9.8" width="2.4" height="2.4" fill="#f4b62a" /></svg>
    <div className="ml-[10px] flex h-full w-[32px] items-center justify-center bg-[#3d4f5d]">
      <svg width="18" height="16" viewBox="0 0 18 16"><rect x="5" y="0" width="13" height="16" rx="1" fill="#21a366" /><rect x="11" y="0" width="7" height="8" fill="#33c481" /><rect x="5" y="8" width="6" height="8" fill="#107c41" /><rect x="0" y="3.5" width="10" height="9" rx="1" fill="#185c37" /><text x="5" y="10.8" textAnchor="middle" fontSize="7.5" fontWeight="700" fill="#fff" fontFamily="Liberation Sans, sans-serif">x</text></svg>
    </div>
    <div className="ml-auto flex items-center pr-[9px] text-[#b9c4cc]">
      <ChevronUp size={11} strokeWidth={1.3} />
      <svg width="11" height="7" viewBox="0 0 11 7" fill="#e8ecef" className="ml-[5px]"><path d="M2 7C0 7 0 4 2 4C2 1 7 0 8 3C11 3 11 7 9 7z" /></svg>
      <svg width="10" height="7" viewBox="0 0 10 7" fill="none" stroke="#dfe5e9" className="ml-[5px]"><rect x="0.5" y="0.5" width="9" height="6" /><rect x="1" y="1" width="3" height="5" fill="#dfe5e9" /></svg>
      <Wifi size={10} strokeWidth={1.2} className="ml-[6px] text-[#8f9ca6]" />
      <Volume2 size={11} strokeWidth={1.1} className="ml-[5px]" />
      <div className="ml-[6px] flex w-[16px] flex-col items-center text-[8px] leading-[11px]"><span>ENG</span><span>SU</span></div>
      <div className="ml-[9px] flex w-[42px] flex-col items-center whitespace-nowrap text-[8.5px] leading-[11px]"><span>7:55 PM</span><span>11/01/2024</span></div>
      <svg width="14" height="15" viewBox="0 0 14 15" className="ml-[10px]"><path d="M0 1h11v8H4L2 11V9H0z" fill="#dfe5e9" /><circle cx="10" cy="11" r="3.5" fill="#1b2f3f" stroke="#b9c4cc" strokeWidth="0.7" /><text x="10" y="13" textAnchor="middle" fontSize="5.5" fill="#dfe5e9" fontFamily="Lato, sans-serif">3</text></svg>
    </div>
  </div>
);

export default function App() {
  return (
    <div className="flex h-[572px] w-[1024px] flex-col overflow-hidden bg-white [font-family:Lato,'Noto_Sans',sans-serif]">
      <TitleBar />
      <TabBar />
      <Ribbon />
      <FormulaBar />
      <div className="flex h-[356px] shrink-0 overflow-hidden">
        <div className="flex w-[1010px] shrink-0 flex-col">
          <ColHeaders />
          <div className="flex min-h-0 flex-1 overflow-hidden">
            <RowHeaders />
            <div className="ml-[9px] flex w-[974px] shrink-0 flex-col">
              <div className="flex h-[222px] shrink-0">
                <Table />
                <div className="ml-[9px]"><Dashboard /></div>
              </div>
              <Breakdown />
            </div>
          </div>
        </div>
        <VScroll />
      </div>
      <SheetBar />
      <StatusBar />
      <Taskbar />
    </div>
  );
}
